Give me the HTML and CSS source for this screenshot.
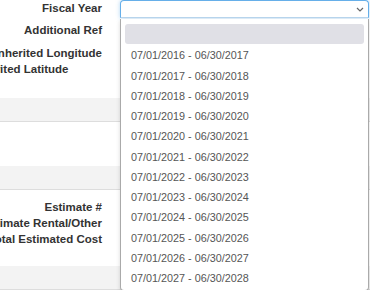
FILE: index.html
```html
<!DOCTYPE html>
<html lang="en">
<head>
    <meta charset="UTF-8">
    <meta name="viewport" content="width=device-width, initial-scale=1.0">
    <title>Fiscal Year</title>
    <link rel="stylesheet" href="styles.css">
</head>
<body>
    <div class="form">
        <div class="field field-first">
            <div class="field-label"><span>Fiscal Year</span></div>
            <div class="control">
                <div class="select">
                    <span class="select-value"></span>
                    <svg class="select-arrow" width="8" height="5" viewBox="0 0 8 5">
                        <path d="M1 1l3 3 3-3" fill="none" stroke="#666" stroke-width="1.2"/>
                    </svg>
                </div>
                <!-- open dropdown list -->
                <ul class="dropdown">
                    <li class="option option-active">&nbsp;</li>
                    <li class="option">07/01/2016 - 06/30/2017</li>
                    <li class="option">07/01/2017 - 06/30/2018</li>
                    <li class="option">07/01/2018 - 06/30/2019</li>
                    <li class="option">07/01/2019 - 06/30/2020</li>
                    <li class="option">07/01/2020 - 06/30/2021</li>
                    <li class="option">07/01/2021 - 06/30/2022</li>
                    <li class="option">07/01/2022 - 06/30/2023</li>
                    <li class="option">07/01/2023 - 06/30/2024</li>
                    <li class="option">07/01/2024 - 06/30/2025</li>
                    <li class="option">07/01/2025 - 06/30/2026</li>
                    <li class="option">07/01/2026 - 06/30/2027</li>
                    <li class="option">07/01/2027 - 06/30/2028</li>
                </ul>
            </div>
        </div>
        <div class="field field-ref">
            <div class="field-label"><span>Additional Ref</span></div>
        </div>
        <div class="field field-geo">
            <div class="field-label"><span>Inherited Longitude</span></div>
        </div>
        <div class="field">
            <div class="field-label field-label-left"><span>Inherited Latitude</span></div>
        </div>

        <div class="section-bar section-bar-first"></div>
        <div class="section-body"></div>
        <div class="section-bar"></div>

        <div class="field field-estimate">
            <div class="field-label"><span>Estimate #</span></div>
        </div>
        <div class="field">
            <div class="field-label"><span>Estimate Rental/Other</span></div>
        </div>
        <div class="field">
            <div class="field-label"><span>Total Estimated Cost</span></div>
        </div>

        <div class="section-bar section-bar-last"></div>
    </div>
</body>
</html>
```

FILE: styles.css
```css
body {
    margin: 0;
    background: #fff;
    font-family: 'Liberation Sans', Arial, sans-serif;
    font-size: 11px;
    color: #333;
    overflow: hidden;
}

.form {
    width: 370px;
}

/* Label + control rows */
.field {
    display: flex;
    height: 16px;
}

.field-first {
    height: 18px;
}

.field-ref {
    margin-top: 4px;
}

.field-geo {
    margin-top: 7px;
}

.field-estimate {
    margin-top: 9px;
}

.field-label {
    display: flex;
    justify-content: flex-end;
    width: 102px;
    flex-shrink: 0;
    line-height: 16px;
    font-size: 11.5px;
    font-weight: bold;
    white-space: nowrap;
}

.field-label-left {
    justify-content: flex-start;
}

.field-label-left span {
    margin-left: -28px;
}

.control {
    position: relative;
    margin-left: 18px;
    width: 250px;
}

/* Select box (focused) */
.select {
    box-sizing: border-box;
    height: 18px;
    width: 249px;
    border: 1px solid #66afe9;
    border-bottom-color: #b9d6ee;
    border-radius: 4px 4px 0 0;
    background: #fff;
    box-shadow: 0 0 4px rgba(102, 175, 233, 0.5);
    position: relative;
}

.select-arrow {
    position: absolute;
    right: 4px;
    top: 6px;
}

/* Dropdown list overlaying the form */
.dropdown {
    position: absolute;
    top: 19px;
    left: 0;
    z-index: 5;
    box-sizing: border-box;
    width: 249px;
    margin: 0;
    padding: 5px 4px 3px;
    list-style: none;
    background: #fff;
    border: 1px solid #aaa;
    border-top: none;
    border-radius: 0 0 4px 4px;
    box-shadow: 0 2px 4px rgba(0, 0, 0, 0.15);
}

.option {
    height: 19.25px;
    padding-top: 1px;
    line-height: 20.25px;
    padding-left: 6px;
    color: #555;
    font-size: 10.8px;
    white-space: nowrap;
}

.option-active {
    background: #e0e0e6;
    border-radius: 3px;
}

/* Grey section separators */
.section-bar {
    height: 23px;
    background: #f3f3f3;
    border-bottom: 1px solid #ddd;
}

.section-bar-first {
    margin-top: 21px;
}

.section-bar-last {
    margin-top: 19px;
}

.section-body {
    height: 44px;
}
```
